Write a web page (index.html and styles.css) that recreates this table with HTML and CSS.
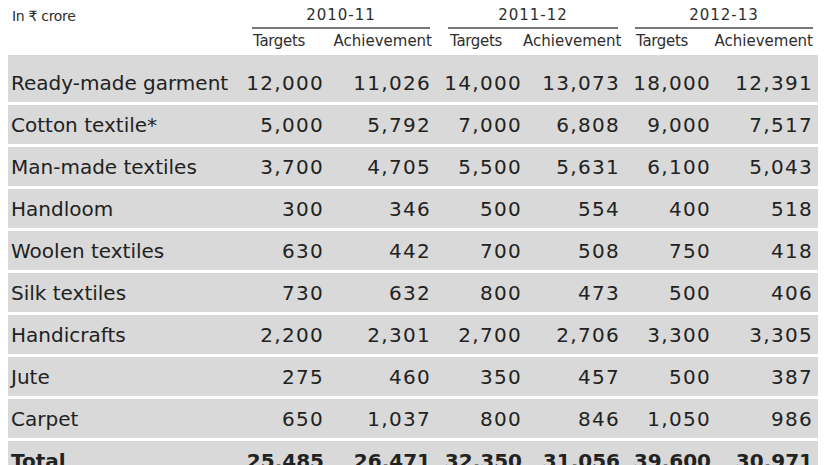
FILE: index.html
```html
<!DOCTYPE html>
<html lang="en">
<head>
  <meta charset="UTF-8">
  <title>Textile exports: targets and achievement</title>
  <link rel="stylesheet" href="styles.css">
</head>
<body>

  <table class="exports">
    <colgroup>
      <col class="c-label">
      <col class="c-t1"><col class="c-a1">
      <col class="c-t2"><col class="c-a2">
      <col class="c-t3"><col class="c-a3">
    </colgroup>
    <thead>
      <tr class="years">
        <th rowspan="2" class="unit">In ₹ crore</th>
        <th colspan="2"><div class="yr yr1">2010-11</div></th>
        <th colspan="2"><div class="yr yr2">2011-12</div></th>
        <th colspan="2"><div class="yr yr3">2012-13</div></th>
      </tr>
      <tr class="subs">
        <th class="tg tg1">Targets</th><th class="ach">Achievement</th>
        <th class="tg tg2">Targets</th><th class="ach">Achievement</th>
        <th class="tg tg3">Targets</th><th class="ach last">Achievement</th>
      </tr>
    </thead>
    <tbody>
      <tr class="first"><td>Ready-made garment</td><td>12,000</td><td>11,026</td><td>14,000</td><td>13,073</td><td>18,000</td><td>12,391</td></tr>
      <tr><td>Cotton textile*</td><td>5,000</td><td>5,792</td><td>7,000</td><td>6,808</td><td>9,000</td><td>7,517</td></tr>
      <tr><td>Man-made textiles</td><td>3,700</td><td>4,705</td><td>5,500</td><td>5,631</td><td>6,100</td><td>5,043</td></tr>
      <tr><td>Handloom</td><td>300</td><td>346</td><td>500</td><td>554</td><td>400</td><td>518</td></tr>
      <tr><td>Woolen textiles</td><td>630</td><td>442</td><td>700</td><td>508</td><td>750</td><td>418</td></tr>
      <tr><td>Silk textiles</td><td>730</td><td>632</td><td>800</td><td>473</td><td>500</td><td>406</td></tr>
      <tr><td>Handicrafts</td><td>2,200</td><td>2,301</td><td>2,700</td><td>2,706</td><td>3,300</td><td>3,305</td></tr>
      <tr><td>Jute</td><td>275</td><td>460</td><td>350</td><td>457</td><td>500</td><td>387</td></tr>
      <tr><td>Carpet</td><td>650</td><td>1,037</td><td>800</td><td>846</td><td>1,050</td><td>986</td></tr>
      <tr class="total"><td>Total</td><td>25,485</td><td>26,471</td><td>32,350</td><td>31,056</td><td>39,600</td><td>30,971</td></tr>
    </tbody>
  </table>

</body>
</html>
```

FILE: styles.css
```css
body { margin: 0 8px; background: #fff; font-family: "DejaVu Sans", sans-serif; color: #222; }

.exports { table-layout: fixed; width: 810px; border-collapse: separate; border-spacing: 0; }
.c-label { width: 236px; }
.c-t1 { width: 81px; }
.c-a1 { width: 107px; }
.c-t2 { width: 91px; }
.c-a2 { width: 98px; }
.c-t3 { width: 91px; }
.c-a3 { width: 106px; }

thead th { padding: 0; font-weight: normal; font-size: 15px; color: #2e2e2e; white-space: nowrap; }
.unit { text-align: left; vertical-align: top; padding: 8px 0 0 4px; font-size: 14px; letter-spacing: -0.3px; }
.years th { height: 30px; vertical-align: top; }
.yr { padding-top: 3px; line-height: 24px; border-bottom: 2px solid #777; text-align: center; letter-spacing: 1px; }
.yr1 { margin: 0 2px 0 8px; }
.yr2 { margin: 0 3px 0 16px; }
.yr3 { margin: 0 5px 0 14px; }
.subs th { height: 25px; line-height: 22px; vertical-align: top; }
.tg { text-align: left; letter-spacing: -0.3px; }
.tg1 { padding-left: 9px; }
.tg2 { padding-left: 18px; }
.tg3 { padding-left: 15px; }
.ach { text-align: right; }
.ach.last { padding-right: 5px; }

tbody td { background: #d9d9d9; height: 39px; padding: 0 1px 0 0; border-bottom: 3px solid #fff; font-size: 20px; text-align: right; letter-spacing: 1.3px; white-space: nowrap; }
tbody td:first-child { text-align: left; padding-left: 3px; letter-spacing: 0; }
tbody td:last-child { padding-right: 5px; }
tbody tr.first td { padding-top: 8px; }
.total td { font-weight: bold; letter-spacing: 0; }
```
